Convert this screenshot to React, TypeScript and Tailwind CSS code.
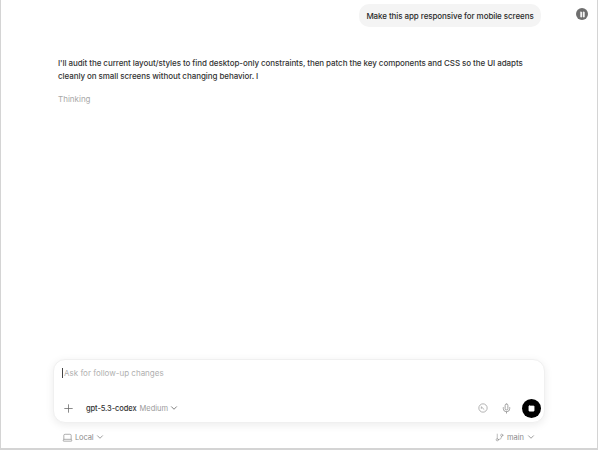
import { ChevronDown, GitBranch, Laptop, Mic, Pause, Plus, Square } from "lucide-react";

const sans = "font-['Inter','Liberation_Sans',sans-serif]";

export default function App() {
  return (
    <div className={`${sans} flex h-[450px] w-[598px] flex-col border-b-2 border-l border-r border-[#d4d4d4] bg-white overflow-hidden`}>
      <div className="flex-1 min-h-0 pl-[57px] pr-[9px] pt-[4px]">
        <div className="flex items-start justify-end">
          <div className="rounded-[10px] bg-[#f4f4f4] h-[23px] w-[182px] flex items-center justify-center text-[8px] font-medium tracking-[-0.08px] text-[#2a2a2a] whitespace-nowrap">
            Make this app responsive for mobile screens
          </div>
          <div className="ml-[35px] mt-[4px] flex h-3 w-3 items-center justify-center rounded-full bg-[#6f6f6f]">
            <Pause size={7} className="text-white" fill="white" strokeWidth={1} />
          </div>
        </div>
        <div className="mt-[30px] w-[480px] text-[8px] font-medium tracking-[-0.07px] leading-[13px] text-[#333]">
          <p className="whitespace-nowrap">I'll audit the current layout/styles to find desktop-only constraints, then patch the key components and CSS so the UI adapts</p>
          <p className="whitespace-nowrap">cleanly on small screens without changing behavior. I</p>
        </div>
        <p className="mt-[10px] text-[8px] leading-[13px] text-[#a8a8a8]">Thinking</p>
      </div>

      <div className="mx-[52px] flex h-[64px] flex-col rounded-[12px] border border-[#f0f0f0] bg-white pl-[8px] pr-[3px] pt-[7px] pb-[4px] shadow-[0_2px_8px_rgba(0,0,0,0.08)]">
        <div className="flex items-center text-[8px] text-[#b0b0b0]">
          <span className="mr-px h-[10px] w-px bg-[#444]" />
          Ask for follow-up changes
        </div>
        <div className="mt-auto flex items-center">
          <Plus size={13} strokeWidth={1.4} className="text-[#666]" />
          <span className="ml-[11px] text-[7.5px] font-medium tracking-[-0.1px] text-[#333]">gpt-5.3-codex</span>
          <span className="ml-[3px] text-[7.5px] text-[#9a9a9a]">Medium</span>
          <ChevronDown size={10} className="ml-[1px] text-[#666]" />
          <svg width="10" height="10" viewBox="0 0 24 24" fill="none" stroke="#9a9a9a" strokeWidth="1.8" className="ml-auto">
            <circle cx="12" cy="12" r="10" />
            <path d="M8 9l7 7M8 9v5" />
          </svg>
          <Mic size={11} className="ml-[13px] text-[#999]" />
          <div className="ml-[10px] flex h-[19px] w-[19px] items-center justify-center rounded-full bg-black">
            <Square size={7} className="text-white" fill="white" />
          </div>
        </div>
      </div>

      <div className="mx-[61px] mb-[5px] mt-[9px] flex items-center justify-between text-[7.5px] text-[#8a8a8a]">
        <div className="flex items-center">
          <Laptop size={11} strokeWidth={1.5} />
          <span className="ml-[2px] tracking-[-0.15px]">Local</span>
          <ChevronDown size={10} className="ml-[2px]" />
        </div>
        <div className="flex items-center">
          <GitBranch size={9} strokeWidth={1.5} />
          <span className="ml-[3px]">main</span>
          <ChevronDown size={10} className="ml-[2px]" />
        </div>
      </div>
    </div>
  );
}
